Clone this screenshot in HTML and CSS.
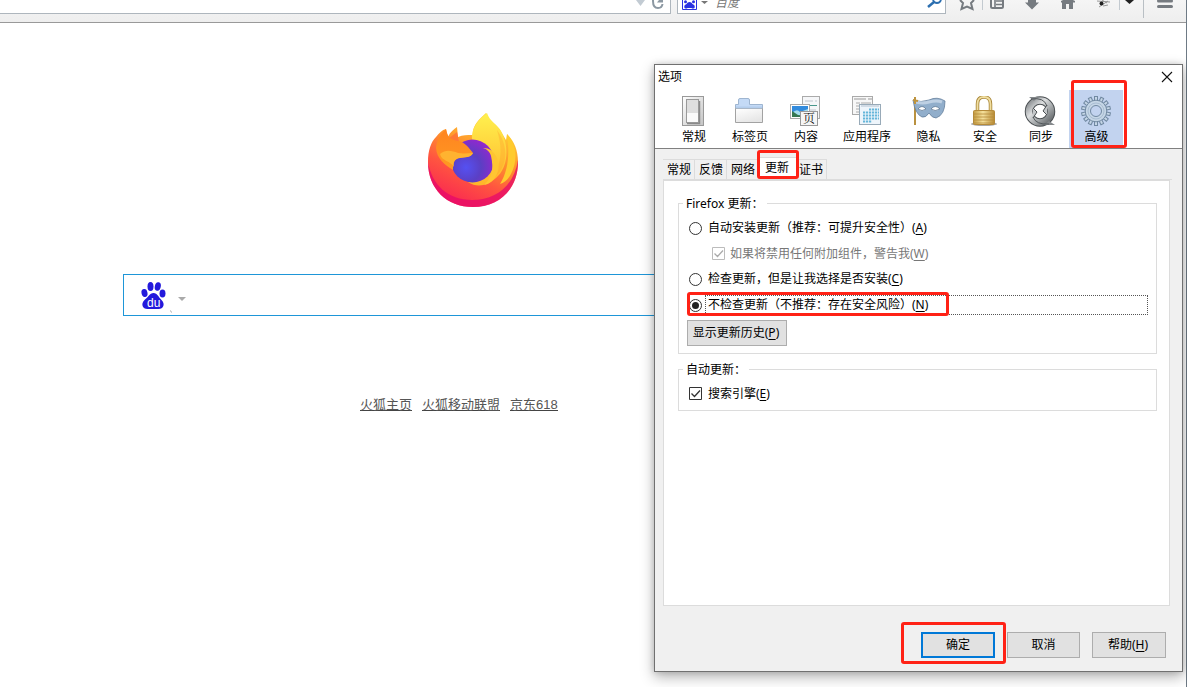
FILE: index.html
```html
<!DOCTYPE html>
<html lang="zh-CN">
<head>
<meta charset="utf-8">
<title>选项</title>
<link rel="stylesheet" href="styles.css">
</head>
<body>
<div class="browser">
  <header class="navbar">
    <div class="url-box">
      <svg width="34" height="13" viewBox="637 0 34 13"><path d="M637 0h9l-4.500 6z" fill="#c2cbd3"/><path d="M654 0v1q0 7 5 7 4 0 4.500-4" fill="none" stroke="#8c98a2" stroke-width="2"/><path d="M658 2.500h6v-2.500h-4z" fill="#8c98a2"/></svg>
    </div>
    <div class="search-box">
      <svg class="engine" width="30" height="13" viewBox="678 0 30 13"><path d="M682.500 0v9.500h14v-9.500" fill="#fff" stroke="#2932e1"/><path d="M689.500 2q2 0 3 2 3 1 2 4-2 1-3 0h-4q-1 1-3 0-1-3 2-4 1-2 3-2z" fill="#2932e1"/><circle cx="685.500" cy="1.800" r="1.500" fill="#2932e1"/><circle cx="693.500" cy="1.800" r="1.500" fill="#2932e1"/><path d="M701 1h7l-3.500 3z" fill="#777"/></svg>
      <span class="placeholder">百度</span>
      <svg class="lens" width="20" height="13" viewBox="924 0 20 13"><path d="M927 7l6-5" stroke="#2c6fb0" stroke-width="2.500"/><path d="M932 0q1 3 4 3t4-3" fill="none" stroke="#2c6fb0" stroke-width="1.800"/></svg>
    </div>
    <svg class="tools" width="240" height="22" viewBox="946 0 240 22">
      <path d="M960 0l3 3-1.500 6 5.500-2.500L972.500 9 971 3l3-3" fill="none" stroke="#767b80" stroke-width="2"/>
      <path d="M982.500 0v10M1119.500 0v10" stroke="#c3cad0"/>
      <path d="M991 0v6.500q0 1.500 1.500 1.500h9q1.500 0 1.500-1.500v-6.500" fill="none" stroke="#767b80" stroke-width="2"/><path d="M995 0v9M996 1h7M996 4.500h7" stroke="#767b80" stroke-width="1.600"/>
      <path d="M1028 0h8v2.500h3l-7 7-7-7h3z" fill="#767b80"/>
      <path d="M1061 1l2-1h10l2 1v1.500h-2v6.500h-4v-5h-3v5h-4v-6.500h-1z" fill="#767b80"/>
      <path d="M1097 1l13 1M1099 7l9-6M1103 6l5-1M1102 0l5 3" stroke="#999"/><circle cx="1101.500" cy="3.500" r="2" fill="#222"/>
      <path d="M1125 0h9l-4.500 4z" fill="#222"/><path d="M1143.500 0v18" stroke="#b9bfc4"/><path d="M1158.500 1h13M1158.500 6.500h13" stroke="#767b80" stroke-width="3" stroke-linecap="round"/>
    </svg>
  </header>
  <main class="start">
    <svg class="fox" width="92" height="95" viewBox="427 113 92 95">
      <defs>
        <linearGradient id="body" x1=".8" y1=".15" x2=".4" y2="1"><stop offset="0" stop-color="#ffd535"/><stop offset=".35" stop-color="#ff932c"/><stop offset=".65" stop-color="#ff5540"/><stop offset="1" stop-color="#fa2a50"/></linearGradient>
        <linearGradient id="flame" x1="0" y1="0" x2="0" y2="1"><stop offset="0" stop-color="#fff14f"/><stop offset="1" stop-color="#ffb429"/></linearGradient>
        <linearGradient id="ear" x1="0" y1="0" x2="0" y2="1"><stop offset="0" stop-color="#ff8420"/><stop offset="1" stop-color="#ff9a22"/></linearGradient>
        <radialGradient id="globe" cx=".35" cy=".65" r=".7"><stop offset="0" stop-color="#5551f2"/><stop offset=".5" stop-color="#5b3fc4"/><stop offset="1" stop-color="#9327ce"/></radialGradient>
      </defs>
      <path d="M428 162c0-12 3-20 8-25 3-4 6-7 10-8l2 8c2-5 6-8 9-10l1 10c5-2 9-2 14-2h1c-1-9 6-16 13-22 3 8 10 11 14 17 2 3 4 7 6 10l1-6c7 7 11 16 11 28 0 27-19 45-45 45s-45-18-45-45z" fill="url(#body)"/>
      <path d="M428 162c4 23 20 38 44 38 25 0 42-15 46-40 1 29-19 47-45 47s-45-18-45-45z" fill="#e5086b" opacity=".75"/>
      <path d="M472 140c-1-12 6-20 15-27 3 9 10 11 14 18 8 14 8 36-5 47-9 8-19 10-28 4 14-3 18-18 4-42z" fill="url(#flame)"/>
      <path d="M497 130c5 16 6 34-6 50 15-9 20-31 6-50z" fill="#ff9e2a" opacity=".35"/>
      <path d="M507 134c10 11 11 27 4 40-3 6-7 9-11 10 8-13 10-29 7-50z" fill="#ffcb2e"/>
      <circle cx="472.500" cy="161" r="21.500" fill="url(#globe)"/>
      <path d="M448 139l9-7 2 10z" fill="#ff7834"/>
      <path d="M436 148c1-9 5-14 10-19 1 8 5 11 12 12 7 1 11 7 15 12-2 5-10 4-15 5-4 2-5 6-5 12-8-5-16-11-17-22z" fill="url(#ear)"/>
      <path d="M440 154c6-5 12-3 18-1 6 1 10 0 15 0-2 5-8 4-13 5-6 1-7 4-6 9-3-6-13-6-14-13z" fill="#ffb330"/>
      <path d="M483 148c10-1 18 12 15 23-3 9-8 13-14 14 8-7 10-16 7-29-1-4-4-7-8-8z" fill="#ffc532"/>
    </svg>
    <div class="search-form">
      <svg width="70" height="40" viewBox="124 275 70 40"><g fill="#2319dc"><ellipse cx="150.500" cy="286.500" rx="3" ry="4.500"/><ellipse cx="157.800" cy="286.500" rx="3" ry="4.300" transform="rotate(12 157.800 286.500)"/><ellipse cx="144.500" cy="293" rx="3" ry="4" transform="rotate(-12 144.500 293)"/><ellipse cx="162.500" cy="293.500" rx="3" ry="4"/><path d="M153.500 293c4 0 5 4 8 7 4 4 2 9-3 9h-11c-5 0-7-5-3-9 4-3 5-7 9-7z"/></g><text x="147" y="307" class="paw-text">du</text><path d="M178 297h8l-4 4z" fill="#aaa"/><path d="M170 311h1M171 312h1" stroke="#aaa"/></svg>
    </div>
    <nav class="links"><a>火狐主页</a><a>火狐移动联盟</a><a>京东618</a></nav>
  </main>
</div>

<section class="dialog">
  <div class="titlebar"><span>选项</span><svg width="12" height="12" viewBox="0 0 12 12"><path d="M1 1l10 10M11 1L1 11" stroke="#111" stroke-width="1.100"/></svg></div>
  <div class="categories">
    <div class="cat"><svg width="32" height="32" viewBox="0 0 32 32"><defs><linearGradient id="gr" x2="1" y2="1"><stop stop-color="#fff"/><stop offset="1" stop-color="#c4c4c4"/></linearGradient></defs><rect x="4.500" y=".5" width="21" height="29" fill="url(#gr)" stroke="#999"/><path d="M9 27.500h12.500V5" fill="none" stroke="#8a8a8a" stroke-width="1.500"/><rect x="8.500" y="3.500" width="12" height="23" fill="#dedede" stroke="#999"/><path d="M9 17h11v9H9z" fill="#fafafa"/></svg><span>常规</span></div>
    <div class="cat"><svg width="32" height="32" viewBox="0 0 32 32"><defs><linearGradient id="fd" y2="1" x2=".5"><stop stop-color="#fff"/><stop offset="1" stop-color="#e6e6e6"/></linearGradient></defs><path d="M1.500 13V8.500H4.500V4q0-1.500 1.500-1.500h8q1.500 0 1.500 1.500v4.500h13V13z" fill="#c4daf6" stroke="#9eb5d0"/><path d="M1.500 26.500v-14h27v14z" fill="url(#fd)" stroke="#a2a2a2"/><path d="M2 11.500h26" stroke="#b3cdec" stroke-width="2"/></svg><span>标签页</span></div>
    <div class="cat"><svg width="32" height="32" viewBox="0 0 32 32"><rect x="12.500" y=".5" width="17" height="22" fill="#f5f6f8" stroke="#aaa"/><path d="M15 5h8M25 5h2M15 14h11M19 18h8" stroke="#c0c5ce"/><path d="M19 9.500h8" stroke="#48978c"/><rect x=".5" y="8.500" width="19" height="14" fill="#fff" stroke="#aaa"/><path d="M2 10h16v11H2z" fill="#328bdd"/><path d="M2 17q5-5 8-1l8-3v7H2z" fill="#a5dded"/><path d="M2 15q3 2 6 4l10 1v1H2z" fill="#357852"/><rect x="10.500" y="15.500" width="17" height="14" fill="#f6f6f6" stroke="#999"/><text class="page-text" x="13" y="27">页</text></svg><span>内容</span></div>
    <div class="cat wide"><svg width="32" height="32" viewBox="0 0 32 32"><rect x="1.500" y=".5" width="20" height="18" fill="#f7f7f7" stroke="#aaa"/><path d="M3 3h12M17 3h4" stroke="#999"/><path d="M5 7h4M5 10h4M5 13h4M5 16h4M10 7h10" stroke="#aaa"/><rect x="8.500" y="8.500" width="21" height="20" fill="#eef5fb" stroke="#98aab8"/><path d="M10 10h18" stroke="#d1dbe5" stroke-width="2"/><path d="M18 13.500h10M12 16.500h16M12 19.500h16M12 22.500h16M12 25.500h9" stroke="#65b6da" stroke-width="2" stroke-dasharray="2.200 .8"/></svg><span>应用程序</span></div>
    <div class="cat privacy"><svg width="34" height="32" viewBox="0 0 34 32"><path d="M3 1v28" stroke="#b99140" stroke-width="2"/><path d="M1 4q8 3 16 0 8-4 16 1 0 14-9 17-4 0-7-5-3 5-7 4Q3 18 1 4z" fill="#91aecb" stroke="#647f9c" stroke-width=".8"/><path d="M4 6q7 2 13 0 8-2 13 0" fill="none" stroke="#bed0e3" stroke-width="3"/><path d="M6 13q4-5 8 0-4 3-8 0M19 13q4-5 9 0-5 3-9 0z" fill="#fff" stroke="#57718d" stroke-width=".7"/><path d="M3 1v7M1 4l5 1" stroke="#bd933f" stroke-width="2"/></svg><span>隐私</span></div>
    <div class="cat"><svg width="32" height="32" viewBox="0 0 32 32"><defs><linearGradient id="gold" x2="1"><stop stop-color="#c49c42"/><stop offset=".45" stop-color="#f5e19c"/><stop offset="1" stop-color="#b88b34"/></linearGradient></defs><ellipse cx="15" cy="28" rx="13" ry="2" fill="#aaa"/><path d="M8.500 15V8q0-7 6.500-7t6.500 7v7" fill="none" stroke="#a98739" stroke-width="3.500"/><path d="M8.500 15V8q0-7 6.500-7t6.500 7v7" fill="none" stroke="#f0dea0" stroke-width="1.800"/><rect x="4.500" y="14.500" width="21" height="14" rx="1" fill="url(#gold)" stroke="#b58b3a"/><path d="M5 18h20M5 21h20M5 24h20M5 27h20" stroke="#b58b3a" stroke-width=".8"/></svg><span>安全</span></div>
    <div class="cat"><svg width="34" height="32" viewBox="0 0 34 32"><defs><linearGradient id="steel" x2="1" y2="1"><stop stop-color="#85898c"/><stop offset=".35" stop-color="#dcdedf"/><stop offset=".65" stop-color="#a4a8aa"/><stop offset="1" stop-color="#626669"/></linearGradient></defs><circle cx="16" cy="15.500" r="11" fill="none" stroke="#4b5053" stroke-width="8.500"/><circle cx="16" cy="15.500" r="11" fill="none" stroke="url(#steel)" stroke-width="6.500"/><path d="M5 1h9l-4 4zM31 29h-11l5-4z" fill="#85898c"/><path d="M9 12l4 4-4 6M23 19l-4-4 4-6" fill="#c5c8ca" stroke="#4b5053"/><path d="M7 3q13-2 16 7M25 28q-13 1-16-7" fill="none" stroke="#4b5053" stroke-width=".9"/></svg><span>同步</span></div>
    <div class="cat selected"><svg width="32" height="32" viewBox="0 0 32 32"><defs><rect id="teeth" x="14.500" y=".5" width="3" height="29"/></defs><g fill="#c5d6e6" stroke="#7189a2" stroke-width="1"><use href="#teeth"/><use href="#teeth" transform="rotate(25.714 16 15)"/><use href="#teeth" transform="rotate(51.429 16 15)"/><use href="#teeth" transform="rotate(77.143 16 15)"/><use href="#teeth" transform="rotate(102.857 16 15)"/><use href="#teeth" transform="rotate(128.571 16 15)"/><use href="#teeth" transform="rotate(154.286 16 15)"/><circle cx="16" cy="15" r="10.800"/></g><circle cx="16" cy="15" r="8" fill="none" stroke="#a9bdd2"/><circle cx="16" cy="15" r="5.500" fill="#c2d3ef" stroke="#7189a2"/></svg><span>高级</span></div>
  </div>
  <div class="content">
    <div class="tabs"><span>常规</span><span>反馈</span><span>网络</span><span class="current">更新</span><span class="last">证书</span></div>
    <div class="panel">
      <div class="group firefox">
        <span class="legend">Firefox 更新：</span>
        <div class="option first"><i class="radio"></i><span>自动安装更新（推荐：可提升安全性）(<u>A</u>)</span></div>
        <div class="option sub"><svg class="box" width="13" height="13" viewBox="0 0 13 13"><path d="M.5.5h12v12H.5z" fill="none" stroke="#bcbcbc"/><path d="M2.500 6.500l3 3 5.500-6" fill="none" stroke="#aaa" stroke-width="1.300"/></svg><span>如果将禁用任何附加组件，警告我(<u>W</u>)</span></div>
        <div class="option third"><i class="radio"></i><span>检查更新，但是让我选择是否安装(<u>C</u>)</span></div>
        <div class="option chosen"><i class="radio on"></i><span class="focus">不检查更新（不推荐：存在安全风险）(<u>N</u>)</span></div>
        <button class="history">显示更新历史(<u>P</u>)</button>
      </div>
      <div class="group auto">
        <span class="legend">自动更新：</span>
        <div class="option"><svg class="box" width="13" height="13" viewBox="0 0 13 13"><path d="M.5.500h12v12H.500z" fill="none" stroke="#333"/><path d="M2.500 6.500l3 3 5.500-6" fill="none" stroke="#333" stroke-width="1.300"/></svg><span>搜索引擎(<u>E</u>)</span></div>
      </div>
    </div>
    <footer class="actions"><button class="ok">确定</button><button class="cancel">取消</button><button class="help">帮助(<u>H</u>)</button></footer>
  </div>
</section>
<div class="mark mark-category"></div>
<div class="mark mark-tab"></div>
<div class="mark mark-option"></div>
<div class="mark mark-ok"></div>
</body>
</html>
```

FILE: styles.css
```css
* { box-sizing: border-box; }
body { margin: 0; width: 1187px; height: 687px; overflow: hidden; background: #fff; position: relative; font: 12px/16px "Noto Sans", "Noto Sans CJK SC", sans-serif; color: #000; }
svg { display: block; flex: none; }
.browser { height: 687px; border-right: 1px solid #6e7a85; }
.navbar { height: 23px; display: flex; align-items: flex-start; background: linear-gradient(#f5f5f5, #eee); border-bottom: 1px solid #999; }
.url-box { width: 671px; height: 14px; background: #fff; border: solid #aeb6bd; border-width: 0 1px 1px 0; display: flex; justify-content: flex-end; }
.search-box { width: 269px; height: 14px; margin-left: 6px; background: #fff; border: solid #aeb6bd; border-width: 0 1px 1px; display: flex; }
.placeholder { font-style: italic; color: #777; line-height: 16px; margin: -5px 0 0 7px; height: 18px; }
.lens { margin-left: auto; }
.start { display: flex; flex-direction: column; }
.fox { margin: 90px 0 0 427px; }
.search-form { margin: 66px 0 0 123px; width: 640px; height: 42px; border: 1px solid #1e96d8; }
.paw-text { font: 12px "Liberation Sans", sans-serif; fill: #fff; }
.links { margin: 80px 0 0 360px; display: flex; gap: 10px; font: 13px/16px "Liberation Sans", "Noto Sans CJK SC", sans-serif; color: #555; }
.links a { border-bottom: 1px solid #444; height: 15px; line-height: 17px; }

.dialog { position: absolute; left: 654px; top: 64px; width: 529px; height: 608px; border: 1px solid #707070; background: #fff; box-shadow: 0 5px 13px rgba(0,0,0,.3), 0 0 6px rgba(0,0,0,.15); }
.titlebar { height: 25px; display: flex; justify-content: space-between; padding: 6px 9px 0 3px; line-height: 12px; }
.titlebar span { line-height: 11px; }
.categories { height: 59px; padding-left: 11px; display: flex; border-bottom: 1px solid #808080; }
.cat { width: 56px; height: 58px; display: flex; flex-direction: column; align-items: center; padding-top: 6px; white-space: nowrap; }
.cat span { line-height: 18px; height: 18px; }
.wide { width: 66px; }
.privacy { width: 57px; }
.selected { width: 54px; background: #c2d3ef; }
.selected span { padding-left: 1px; }
.page-text { font: 12px "Noto Serif CJK SC", "Noto Sans CJK SC", serif; fill: #111; }
.content { background: #f0f0f0; height: 522px; padding: 9px 12px 0 8px; }
.tabs { height: 22px; display: flex; align-items: flex-end; border-bottom: 1px solid #dcdcdc; margin-right: -2px; }
.tabs span { width: 32px; height: 20px; padding-left: 4px; border: solid #dcdcdc; border-width: 1px 1px 0 0; line-height: 19px; }
.tabs .current { width: 38px; height: 22px; background: #fff; padding-left: 6px; line-height: 19px; }
.tabs .last { width: 30px; padding-left: 2px; }
.panel { height: 426px; background: #fff; border: 1px solid #dcdcdc; padding: 22px 12px 0 14px; }
.group { border: 1px solid #dcdcdc; padding-left: 8px; display: flex; flex-direction: column; align-items: flex-start; }
.firefox { height: 151px; }
.auto { height: 42px; margin-top: 15px; }
.legend { background: #fff; margin: -9px 0 0 -4px; padding: 0 0 0 3px; width: 66px; height: 16px; line-height: 18px; white-space: nowrap; }
.firefox .legend { width: 84px; }
.option { height: 16px; display: flex; align-items: center; margin: 9px 0 0 2px; gap: 6px; white-space: nowrap; }
.first span { line-height: 18px; }
.radio { width: 13px; height: 13px; border: 1px solid #333; border-radius: 50%; display: flex; flex: none; align-items: center; justify-content: center; background: #fff; }
.on::after { content: ""; width: 7px; height: 7px; border-radius: 50%; background: #222; }
.sub { margin-left: 25px; margin-top: 10px; gap: 5px; color: #777; }
.box { margin-bottom: 2px; }
.third { margin-top: 9px; }
.chosen { margin-top: 8px; height: 20px; gap: 3px; }
.focus { width: 443px; height: 20px; border: 1px dotted #555; padding-left: 2px; line-height: 18px; }
button { font: inherit; padding: 0 2px 0 0; height: 26px; border: 1px solid #adadad; background: #e1e1e1; color: #000; line-height: 22px; }
.history { width: 100px; margin-top: 5px; }
u { text-underline-offset: 2px; }
.actions { display: flex; padding-top: 26px; justify-content: flex-end; margin-right: 4px; }
.ok { width: 74px; padding: 0; border: 2px solid #0078d7; }
.cancel { width: 73px; padding: 0; margin: 0 12px; }
.help { width: 74px; }
.mark { position: absolute; border: 3px solid #ff2216; border-radius: 3px; }
.mark-category { left: 1071px; top: 80px; width: 56px; height: 68px; }
.mark-tab { left: 757px; top: 150px; width: 42px; height: 29px; }
.mark-option { left: 687px; top: 292px; width: 262px; height: 24px; }
.mark-ok { left: 901px; top: 622px; width: 105px; height: 42px; }
```
